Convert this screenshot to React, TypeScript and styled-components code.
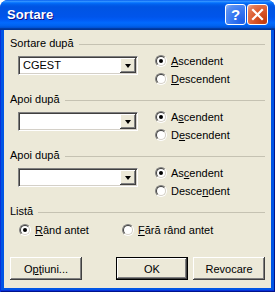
import React from 'react';
import styled, { createGlobalStyle } from 'styled-components';

const Global = createGlobalStyle`
  html, body { margin: 0; padding: 0; background: #ffffff; }
  body { font-family: "Liberation Sans", Arial, sans-serif; font-size: 11px; color: #000; }
  * { box-sizing: border-box; }
`;

const Window = styled.div`
  width: 275px;
  height: 292px;
  display: flex;
  flex-direction: column;
  border-radius: 8px 8px 0 0;
  overflow: hidden;
  background: #0054e3;
`;

const TitleBar = styled.div`
  height: 30px;
  flex: none;
  display: flex;
  align-items: flex-start;
  padding: 0 7px 0 7px;
  background: linear-gradient(
    to bottom,
    #0058ee 0%, #3593ff 4%, #288eff 6%, #127dff 8%, #036ffc 10%, #0262ee 14%,
    #0057e5 20%, #0054e3 24%, #0055eb 56%, #005bf5 66%, #026afe 76%,
    #0062ef 86%, #0052d6 92%, #0040ab 94%, #003092 100%
  );
`;

const Title = styled.div`
  flex: 1;
  margin-top: 7px;
  font-family: "Liberation Sans", Arial, sans-serif;
  font-weight: bold;
  font-size: 13px;
  color: #ffffff;
  text-shadow: 1px 1px #0f1089;
  letter-spacing: 0.1px;
`;

const Caps = styled.div`
  display: flex;
  gap: 1px;
  margin-top: 4px;
`;

const CapButton = styled.div<{ $kind: 'help' | 'close' }>`
  width: 21px;
  height: 21px;
  border: 1px solid #ffffff;
  border-radius: 3px;
  display: flex;
  align-items: center;
  justify-content: center;
  color: #fff;
  font-family: "Liberation Sans", Arial, sans-serif;
  font-weight: bold;
  font-size: 15px;
  background: ${(p) =>
    p.$kind === 'help'
      ? 'radial-gradient(circle at 85% 85%, #1c5fe8 0%, #3a7af2 50%, #5a8ff0 80%, #9fbdf6 100%)'
      : 'radial-gradient(circle at 85% 85%, #c23a0c 0%, #dc5a2e 50%, #e27a55 80%, #f2b5a0 100%)'};
`;

const Frame = styled.div`
  flex: 1;
  display: flex;
  padding: 0 4px 4px 4px;
  background: #0055e5;
  box-shadow: inset 1px 0 #0831d9, inset -1px 0 #00138c, inset 0 -1px #00138c, inset 0 -2px #0831d9;
`;

const Content = styled.div`
  flex: 1;
  display: flex;
  flex-direction: column;
  background: #ece9d8;
  padding: 7px 6px 0 6px;
`;

const Section = styled.div`
  height: 56px;
  display: flex;
  flex-direction: column;
`;

const Header = styled.div`
  height: 13px;
  display: flex;
  align-items: center;
  gap: 5px;
  line-height: 13px;
  white-space: nowrap;
`;

const Line = styled.div`
  flex: 1;
  height: 1px;
  background: #c5c2b2;
  margin-top: 1px;
`;

const Row = styled.div`
  display: flex;
  align-items: flex-start;
`;

const Combo = styled.div`
  width: 120px;
  height: 19px;
  margin: 6px 0 0 8px;
  display: flex;
  align-items: center;
  background: #ffffff;
  border: 1px solid;
  border-color: #808080 #ffffff #ffffff #808080;
  box-shadow: inset 1px 1px #404040, inset -1px -1px #d4d0c8;
  padding: 1px 1px 1px 4px;
`;

const ComboText = styled.div`
  flex: 1;
  line-height: 15px;
`;

const DropButton = styled.div`
  width: 16px;
  height: 15px;
  display: flex;
  align-items: center;
  justify-content: center;
  background: #ece9d8;
  box-shadow: inset -1px -1px #404040, inset 1px 1px #ffffff, inset -2px -2px #808080;
`;

const Arrow = styled.div`
  width: 0;
  height: 0;
  border-left: 3.5px solid transparent;
  border-right: 3.5px solid transparent;
  border-top: 4px solid #000;
  margin-top: 1px;
`;

const Radios = styled.div`
  display: flex;
  flex-direction: column;
  margin: 2px 0 0 17px;
`;

const RadioRow = styled.label<{ $width?: number }>`
  height: 18px;
  display: flex;
  align-items: center;
  gap: 4px;
  ${(p) => (p.$width ? `width: ${p.$width}px;` : '')}
`;

const RadioOuter = styled.span`
  width: 12px;
  height: 12px;
  border-radius: 50%;
  border: 1px solid;
  border-color: #808080 #ffffff #ffffff #808080;
  display: flex;
  flex: none;
`;

const RadioInner = styled.span`
  flex: 1;
  border-radius: 50%;
  border: 1px solid;
  border-color: #404040 #d4d0c8 #d4d0c8 #404040;
  background: #ffffff;
  display: flex;
  align-items: center;
  justify-content: center;
`;

const Dot = styled.span`
  width: 4px;
  height: 4px;
  border-radius: 50%;
  background: #000;
`;

const ListRow = styled.div`
  display: flex;
  margin: 3px 0 0 9px;
`;

const Buttons = styled.div`
  display: flex;
  margin-top: 18px;
`;

const Button = styled.div<{ $default?: boolean; $gap?: number }>`
  width: 72px;
  height: 23px;
  margin-left: ${(p) => p.$gap ?? 0}px;
  display: flex;
  align-items: center;
  justify-content: center;
  background: #ece9d8;
  ${(p) =>
    p.$default
      ? 'border: 1px solid #000; box-shadow: inset -1px -1px #404040, inset 1px 1px #ffffff, inset -2px -2px #808080;'
      : 'box-shadow: inset -1px -1px #404040, inset 1px 1px #ffffff, inset -2px -2px #808080, inset 2px 2px #ece9d8;'}
`;

type RadioProps = { checked?: boolean; children: React.ReactNode; width?: number };

function Radio({ checked, children, width }: RadioProps) {
  return (
    <RadioRow $width={width}>
      <RadioOuter>
        <RadioInner>{checked && <Dot />}</RadioInner>
      </RadioOuter>
      <span>{children}</span>
    </RadioRow>
  );
}

type SortSectionProps = {
  title: React.ReactNode;
  value?: string;
  asc: React.ReactNode;
  desc: React.ReactNode;
};

function SortSection({ title, value, asc, desc }: SortSectionProps) {
  return (
    <Section>
      <Header>
        <span>{title}</span>
        <Line />
      </Header>
      <Row>
        <Combo>
          <ComboText>{value}</ComboText>
          <DropButton>
            <Arrow />
          </DropButton>
        </Combo>
        <Radios>
          <Radio checked>{asc}</Radio>
          <Radio>{desc}</Radio>
        </Radios>
      </Row>
    </Section>
  );
}

export default function App() {
  return (
    <>
      <Global />
      <Window>
        <TitleBar>
          <Title>Sortare</Title>
          <Caps>
            <CapButton $kind="help">?</CapButton>
            <CapButton $kind="close">
              <svg width="13" height="13" viewBox="0 0 13 13">
                <path d="M2 2 L11 11 M11 2 L2 11" stroke="#fff" strokeWidth="2.2" strokeLinecap="square" />
              </svg>
            </CapButton>
          </Caps>
        </TitleBar>
        <Frame>
          <Content>
            <SortSection
              title="Sortare după"
              value="CGEST"
              asc={<><u>A</u>scendent</>}
              desc={<><u>D</u>escendent</>}
            />
            <SortSection
              title="Apoi după"
              asc={<>A<u>s</u>cendent</>}
              desc={<>D<u>e</u>scendent</>}
            />
            <SortSection
              title="Apoi după"
              asc={<>As<u>c</u>endent</>}
              desc={<>Desce<u>n</u>dent</>}
            />
            <Header>
              <span>Listă</span>
              <Line />
            </Header>
            <ListRow>
              <Radio checked width={103}><u>R</u>ând antet</Radio>
              <Radio><u>F</u>ără rând antet</Radio>
            </ListRow>
            <Buttons>
              <Button>O<u>p</u>ţiuni...</Button>
              <Button $default $gap={34}>OK</Button>
              <Button $gap={5}>Revocare</Button>
            </Buttons>
          </Content>
        </Frame>
      </Window>
    </>
  );
}
